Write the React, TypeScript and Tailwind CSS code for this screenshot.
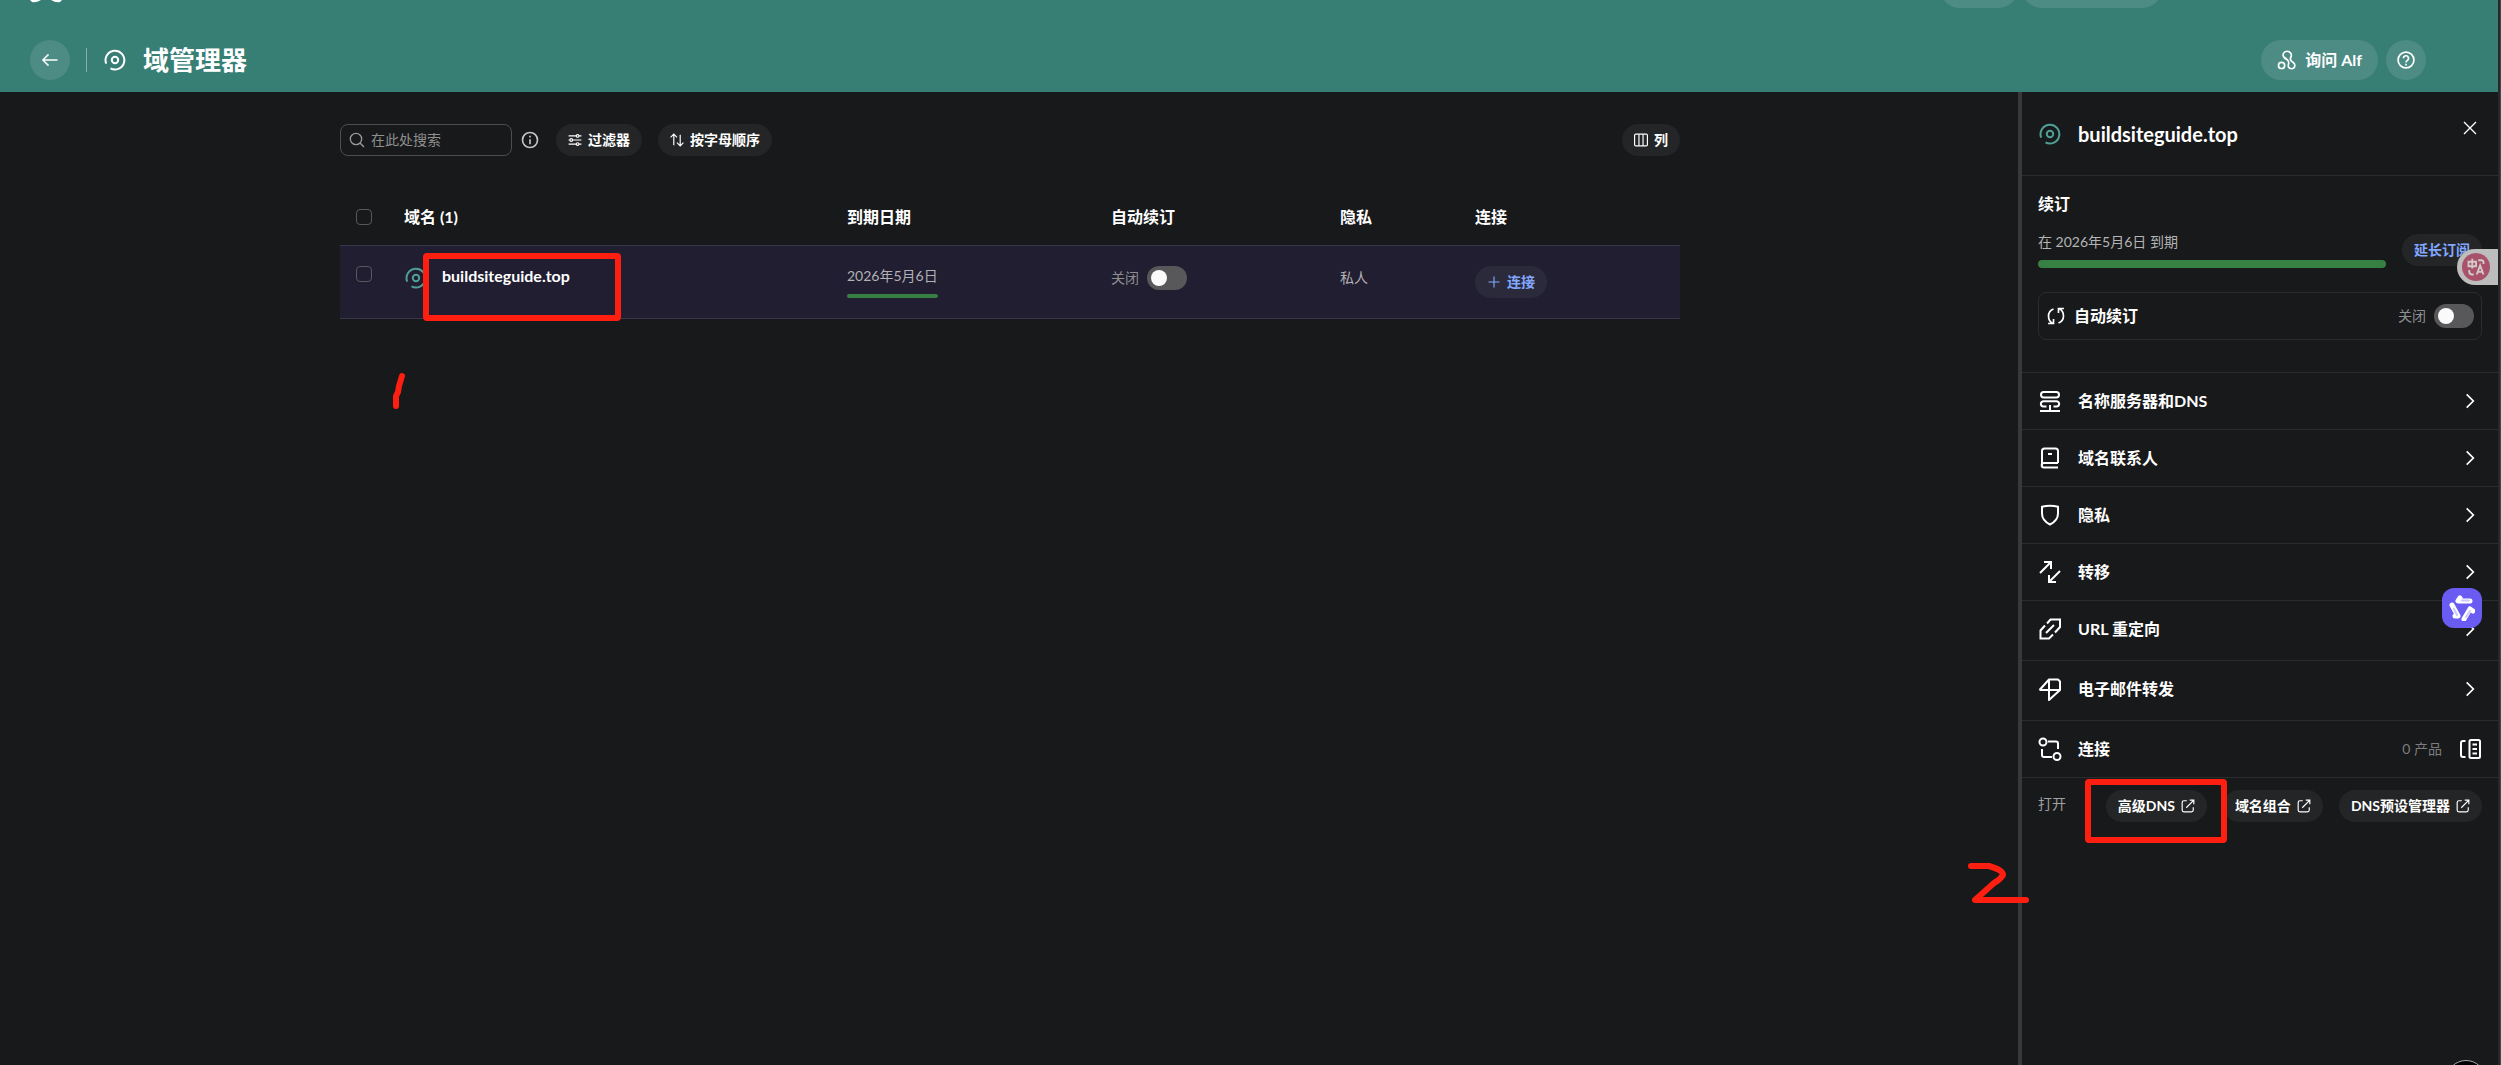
import React, { useState } from "react";

interface IconProps {
  className?: string;
  children?: React.ReactNode;
  strokeWidth?: number;
}

const Icon = ({ className = "size-6", children, strokeWidth = 2 }: IconProps) => (
  <svg
    viewBox="0 0 24 24"
    fill="none"
    stroke="currentColor"
    strokeWidth={strokeWidth}
    className={`shrink-0 ${className}`}
    aria-hidden="true"
  >
    {children}
  </svg>
);

const DomainIcon = ({ className }: { className?: string }) => (
  <Icon className={className}>
    <path d="M7.5 20.4A9.4 9.4 0 1 0 3.2 15.6" />
    <circle cx="12" cy="12" r="3.2" />
  </Icon>
);

const ExternalIcon = () => (
  <Icon className="size-3.5">
    <path d="M10 3H5a3 3 0 0 0-3 3v13a3 3 0 0 0 3 3h13a3 3 0 0 0 3-3v-5" />
    <path d="M9 15 22 2M15 2h7v7" />
  </Icon>
);

const ToggleSwitch = ({ label }: { label: string }) => {
  const [on, setOn] = useState(false);

  return (
    <label className="flex h-6 items-center gap-2 text-sm text-[#8f8f90]">
      <span>关闭</span>
      <input
        type="checkbox"
        role="switch"
        aria-label={label}
        checked={on}
        onChange={() => setOn(!on)}
        className="h-6 w-10 appearance-none rounded-full bg-[#58585a] p-1 before:block before:size-4 before:rounded-full before:bg-[#fafafa] checked:bg-[#368043] checked:before:ml-4"
      />
    </label>
  );
};

const panelRows = [
  {
    label: "名称服务器和DNS",
    height: "h-[57px]",
    icon: (
      <>
        <rect x="3" y="3" width="18" height="5.5" rx="2.7" />
        <path d="M8.5 17.5h-3a2.6 2.6 0 0 1 0-5.3h13a2.6 2.6 0 0 1 0 5.3h-3M12 16v6M2 22h20" />
      </>
    ),
  },
  {
    label: "域名联系人",
    height: "h-[57px]",
    icon: (
      <>
        <path d="M20 17V5a2.5 2.5 0 0 0-2.5-2.5h-11A2.5 2.5 0 0 0 4 5v14.5" />
        <path d="M20 17H6a2.3 2.3 0 0 0 0 4.600h14M10 8h4" />
      </>
    ),
  },
  {
    label: "隐私",
    height: "h-[57px]",
    icon: <path d="M4 3.8Q12 1.8 20 3.8V10.5C20 15.5 17 19 12 21.5C7 19 4 15.5 4 10.5Z" />,
  },
  {
    label: "转移",
    height: "h-[57px]",
    icon: <path d="M2 13 13 2M6 2h7v7M22 11 11 22M18 22h-7v-7" />,
  },
  {
    label: "URL 重定向",
    height: "h-[60px] pb-1",
    icon: (
      <path d="M9 6.5 12.5 2.5H22V10L17 15.5M8 16l8-8M7 8.500 2.500 13.500V21.500H11L15 17.500" />
    ),
  },
  {
    label: "电子邮件转发",
    height: "h-[60px] pb-1",
    icon: <path d="M1.500 13 11 2.500h9L22 4.500V13L11 23V2.500M1.500 13H22" strokeLinejoin="round" />,
  },
];

const headings = ["到期日期", "自动续订", "隐私", "连接"];

const Header = () => (
  <header className="relative flex h-[92px] items-end justify-between overflow-hidden bg-[#377e75] pr-[72px] pb-3 pl-[30px]">
    {/* Lower edge of the global bar above this header */}
    <svg className="absolute top-0 left-[30px] h-[3px] w-8" viewBox="0 0 32 3" aria-hidden="true">
      <path d="M0 0h11Q6 3 2 2ZM21 0h11L30 2Q26 3 21 0Z" fill="white" />
    </svg>
    <div className="absolute -top-8 right-[336px] flex gap-1">
      <div className="h-10 w-[78px] rounded-full bg-[#4c8c84]" />
      <div className="h-10 w-[140px] rounded-full bg-[#4c8c84]" />
    </div>

    <div className="flex items-center text-white">
      <button
        aria-label="返回"
        className="grid size-10 place-items-center rounded-full bg-[#4c8c84]"
      >
        <Icon className="size-[18px]">
          <path d="M22 12H3M10 4.500 2.500 12l7.500 7.500" />
        </Icon>
      </button>
      <span className="ml-4 h-6 w-px bg-[#87b2ac]" />
      <DomainIcon className="ml-4 size-6" />
      <h1 className="ml-4 text-[26px] leading-10 font-bold">域管理器</h1>
    </div>

    <div className="flex gap-2 text-white">
      <button className="flex h-10 items-center gap-2 rounded-full bg-[#4c8c84] px-4 text-base font-bold">
        <Icon className="size-5">
          <circle cx="5.500" cy="18.500" r="3.700" />
          <path d="M9 9.500C5.500 6 8 1.500 12 1.500s6.500 4 4.500 7.500 1 4 3.500 6.500 1.500 7-2.500 7-4.500-3-3.500-6.500-2-4.500-5-7Z" />
        </Icon>
        询问 Alf
      </button>
      <button
        aria-label="帮助"
        className="grid size-10 place-items-center rounded-full bg-[#4c8c84]"
      >
        <Icon className="size-5">
          <circle cx="12" cy="12" r="9.500" />
          <path d="M9 10a3 3 0 1 1 4.500 2.500Q12 13.300 12 15M12 16.500v2" />
        </Icon>
      </button>
    </div>
  </header>
);

const pill = "flex h-8 items-center gap-1.5 rounded-full px-3 text-sm font-bold";
const toolButton = `${pill} bg-[#242526] text-white`;
const checkbox =
  "block size-4 appearance-none rounded-[4px] border border-[#58585c] checked:bg-[#82a7ff]";

const Toolbar = () => (
  <div className="flex items-center">
    <label className="flex h-8 w-[172px] items-center gap-1.5 rounded-lg border border-[#4c4d4f] px-2">
      <Icon className="size-4 text-[#9a9a9b]">
        <circle cx="10.500" cy="10.500" r="8.500" />
        <path d="m16.500 16.500 6 6" />
      </Icon>
      <input
        type="search"
        aria-label="搜索"
        placeholder="在此处搜索"
        className="min-w-0 flex-1 bg-transparent text-sm text-white outline-none placeholder:text-[#8f8f90]"
      />
    </label>
    <Icon className="ml-2 size-5 text-[#c4c4c5]">
      <circle cx="12" cy="12" r="9" />
      <path d="M12 11v6M12 7v2" />
    </Icon>
    <button className={`${toolButton} ml-4`}>
      <Icon className="size-3.5">
        <path d="M1 5h13M19 5h4M1 12h2M8 12h15M1 19h13M19 19h4" />
        <circle cx="16.500" cy="5" r="2.300" />
        <circle cx="5.500" cy="12" r="2.300" />
        <circle cx="16.500" cy="19" r="2.300" />
      </Icon>
      过滤器
    </button>
    <button className={`${toolButton} ml-4`}>
      <Icon className="size-3.5">
        <path d="M6.500 21V2M1 7.500 6.500 2l5.500 5.500M17.500 3v19M12 16.500l5.500 5.500 5.500-5.500" />
      </Icon>
      按字母顺序
    </button>
    <button className={`${toolButton} ml-auto`}>
      <Icon className="size-3.5">
        <rect x="1" y="2" width="22" height="20" rx="2" />
        <path d="M8.500 2v20M15.500 2v20" />
      </Icon>
      列
    </button>
  </div>
);

const DomainTable = () => (
  <table className="mt-8 w-full table-fixed border-separate border-spacing-0 text-left">
    <colgroup>
      <col className="w-16" />
      <col className="w-[443px]" />
      <col className="w-[264px]" />
      <col className="w-[229px]" />
      <col className="w-[135px]" />
      <col />
    </colgroup>
    <thead>
      <tr className="h-[57px] text-base text-white">
        <th className="pl-4">
          <input type="checkbox" aria-label="全选" className={checkbox} />
        </th>
        <th className="font-bold">域名 (1)</th>
        {headings.map((heading) => (
          <th key={heading} className="font-bold">
            {heading}
          </th>
        ))}
      </tr>
    </thead>
    <tbody>
      <tr className="bg-[#201e30] align-top text-sm text-[#b2b2b6] *:border-y *:border-[#37364a] *:py-5">
        <td className="pl-4">
          <input type="checkbox" aria-label="buildsiteguide.top" className={checkbox} />
        </td>
        <td>
          <div className="relative flex h-6">
            <DomainIcon className="size-6 text-[#4fa096]" />
            <a href="#domain" className="ml-3.5 text-base leading-5 font-bold text-white">
              buildsiteguide.top
            </a>
            <div className="absolute -top-[13px] left-[19px] h-[68px] w-[198px] rounded-[4px] border-6 border-[#ff1f10]" />
          </div>
        </td>
        <td>
          <div className="w-fit">
            <p>2026年5月6日</p>
            <div className="mt-2 h-1 rounded-full bg-[#368043]" />
          </div>
        </td>
        <td>
          <ToggleSwitch label="自动续订" />
        </td>
        <td className="leading-6">私人</td>
        <td>
          <button className={`${pill} bg-[#2b2a3a] text-[#82a7ff]`}>
            <Icon className="size-3.5">
              <path d="M12 2.500v19M2.500 12h19" />
            </Icon>
            连接
          </button>
        </td>
      </tr>
    </tbody>
  </table>
);

const DomainPanel = () => (
  <aside className="relative w-[480px] shrink-0 border-l-4 border-[#38383a] text-white">
    <div className="flex h-[84px] items-center border-b border-[#2b2c2e] px-4">
      <DomainIcon className="size-6 text-[#4fa096]" />
      <h2 className="ml-4 text-xl leading-6 font-bold">buildsiteguide.top</h2>
      <button aria-label="关闭面板" className="mr-1 mb-3 ml-auto grid size-4 place-items-center">
        <Icon className="size-4">
          <path d="m3 3 18 18M21 3 3 21" />
        </Icon>
      </button>
    </div>

    <section className="border-b border-[#2b2c2e] px-4 pt-4 pb-8">
      <h3 className="text-base leading-6 font-bold">续订</h3>
      <div className="mt-4 flex gap-4">
        <div className="flex-1">
          <p className="text-sm text-[#b4b4b5]">在 2026年5月6日 到期</p>
          <div className="mt-2 h-2 rounded-full bg-[#368043]" />
        </div>
        <button className="mt-0.5 h-8 rounded-full bg-[#242526] px-3 text-sm font-bold text-[#82a7ff]">
          延长订阅
        </button>
      </div>
      <div className="mt-6 flex h-12 items-center rounded-lg border border-[#2b2c2e] px-[7px]">
        <Icon className="size-5">
          <path d="M9 3.500Q3 6 3 12t5 9M9 15.500V21H2.500M15 20.500Q21 18 21 12T16 3M15 8.500V3h6.500" />
        </Icon>
        <h3 className="ml-2 flex-1 text-base font-bold">自动续订</h3>
        <ToggleSwitch label="自动续订" />
      </div>
    </section>

    <nav>
      {panelRows.map((row) => (
        <button
          key={row.label}
          className={`${row.height} flex w-full items-center border-b border-[#2b2c2e] pr-5 pl-4 text-base font-bold`}
        >
          <Icon>{row.icon}</Icon>
          <span className="ml-4">{row.label}</span>
          <Icon className="ml-auto size-4" strokeWidth={2.5}>
            <path d="m7 2 10 10L7 22" />
          </Icon>
        </button>
      ))}
      <button className="flex h-[57px] w-full items-center border-b border-[#2b2c2e] px-4 text-base font-bold">
        <Icon>
          <circle cx="5" cy="5" r="3.500" />
          <circle cx="19" cy="19.500" r="3.500" />
          <path d="M10 4.500h8q2 0 2 2V12M4 12v6q0 2 2 2h8" />
        </Icon>
        <span className="ml-4">连接</span>
        <span className="ml-auto text-sm font-normal text-[#7d7d7f]">0 产品</span>
        <Icon className="ml-4 size-6">
          <rect x="11.500" y="3" width="10.500" height="18" rx="1.500" />
          <path d="M7.500 4H5Q3 4 3 6v12q0 2 2 2h2.500M14.500 7.500h4.500M14.500 12h4.500M14.500 16.500h4.500" />
        </Icon>
      </button>
    </nav>

    <div className="flex items-center justify-between px-4 pt-3">
      <span className="pb-1 text-sm text-[#a0a0a1]">打开</span>
      <div className="flex gap-4">
        {["高级DNS", "域名组合", "DNS预设管理器"].map((label) => (
          <a key={label} href="#open" className={toolButton}>
            {label}
            <ExternalIcon />
          </a>
        ))}
      </div>
    </div>

    {/* Highlight around the advanced DNS button */}
    <div className="absolute top-[687px] left-[63px] h-16 w-[142px] rounded-[4px] border-6 border-[#ff1f10]" />
    <svg
      className="absolute top-[768px] -left-[55px] h-12 w-16"
      viewBox="0 0 64 48"
      fill="none"
      stroke="#ff1f10"
      strokeWidth="6"
      strokeLinecap="round"
      strokeLinejoin="round"
      aria-hidden="true"
    >
      <path d="M4 6H22Q36 10 36 15Q33 20 27 23L8 40H59" />
    </svg>

    {/* Floating browser extension widgets */}
    <button
      aria-label="翻译"
      className="absolute top-[157px] right-0 flex h-9 w-[41px] items-center rounded-l-full bg-[#bdbdbd] pl-[5px]"
    >
      <span className="grid size-7 place-items-center rounded-full bg-[#a9526b] text-[#d3c9cc]">
        <Icon className="size-[18px]" strokeWidth={2.5}>
          <path d="M2 5h10v6H2ZM7 1v13M15 3h4q3 0 3 3v2M3 16v2q0 4 4 4h2M13 22l4.500-12L22 22M14.500 18.500h6" />
        </Icon>
      </span>
    </button>
    <button
      aria-label="助手"
      className="absolute top-[496px] right-4 grid size-10 place-items-center rounded-xl bg-[#6a5cf2]"
    >
      <svg viewBox="0 0 26 26" className="size-[26px]" fill="none" strokeLinecap="round" aria-hidden="true">
        <g stroke="white" strokeWidth="5" strokeLinejoin="round">
          <path d="M11 3 9 6H21" />
          <path d="M3 10 9 21 6 21" />
          <path d="M21 14 15 24 M21 14 24 16" />
        </g>
        <g stroke="#cdc8fb" strokeWidth="2">
          <path d="M13 5.500H20" />
          <path d="M5 14 8 20" />
          <path d="M21 16 17 22" />
        </g>
      </svg>
    </button>
    <div className="absolute right-3 bottom-0 h-[5px] w-10 overflow-hidden">
      <div className="size-10 rounded-full border border-[#a8a8a8] bg-black" />
    </div>
  </aside>
);

const App = () => {
  return (
    <div className="flex min-h-screen bg-[#18191b] font-[Lato,'Noto_Sans_CJK_SC',sans-serif]">
      <div className="flex min-w-0 flex-1 flex-col">
        <Header />
        <div className="flex flex-1">
          <main className="relative min-w-0 flex-1 pt-8 pl-0.5">
            <div className="mx-auto max-w-[1340px]">
              <Toolbar />
              <DomainTable />
            </div>
            <svg
              className="absolute top-[280px] left-[390px] h-10 w-5"
              viewBox="0 0 20 40"
              fill="none"
              stroke="#ff1f10"
              strokeWidth="6"
              strokeLinecap="round"
              strokeLinejoin="round"
              aria-hidden="true"
            >
              <path d="M12 4 9 14 8 20 6 24V34" />
            </svg>
          </main>
          <DomainPanel />
        </div>
      </div>
      {/* Window edge */}
      <div className="w-[3px] border-r border-[#44474b] bg-[#26282a]" />
    </div>
  );
};

export default App;
